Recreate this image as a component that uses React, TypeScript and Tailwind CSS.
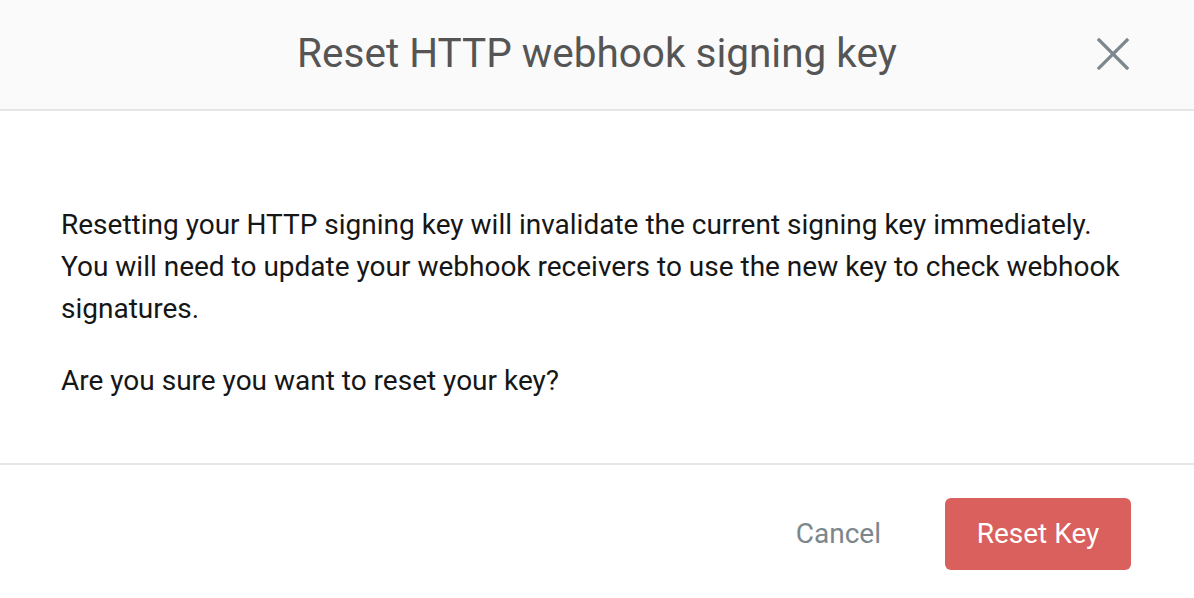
export default function App() {
  return (
    <div className="w-[1194px] h-[598px] bg-white flex flex-col overflow-hidden" style={{ fontFamily: 'Roboto, "Noto Sans", sans-serif' }}>
      <div className="relative h-[111px] shrink-0 bg-[#fafafa] border-b-2 border-[#e6e6e6] flex items-center justify-center">
        <h2 className="text-[40.5px] font-normal text-[#555555] leading-none pb-[2px]">Reset HTTP webhook signing key</h2>
        <button className="absolute right-[64px] top-[37px] w-[34px] h-[34px] flex items-center justify-center">
          <svg width="34" height="34" viewBox="0 0 34 34" fill="none" stroke="#7d878e" strokeWidth="3.2" strokeLinecap="square">
            <path d="M3 3 L31 31 M31 3 L3 31" />
          </svg>
        </button>
      </div>
      <div className="h-[354px] shrink-0 px-[61px] pt-[93px] border-b-2 border-[#e6e6e6] text-[28px] leading-[42px] text-[#161616]">
        <p>
          Resetting your HTTP signing key will invalidate the current signing key immediately.
          <br />
          You will need to update your webhook receivers to use the new key to check webhook signatures.
        </p>
        <p className="mt-[30px]">Are you sure you want to reset your key?</p>
      </div>
      <div className="flex-1 flex items-center justify-end pr-[63px] pt-[4px] gap-[64px]">
        <button className="text-[28px] text-[#7c868d]">Cancel</button>
        <button className="w-[186px] h-[72px] rounded-[6px] bg-[#d9605c] text-white text-[28px]">Reset Key</button>
      </div>
    </div>
  )
}
